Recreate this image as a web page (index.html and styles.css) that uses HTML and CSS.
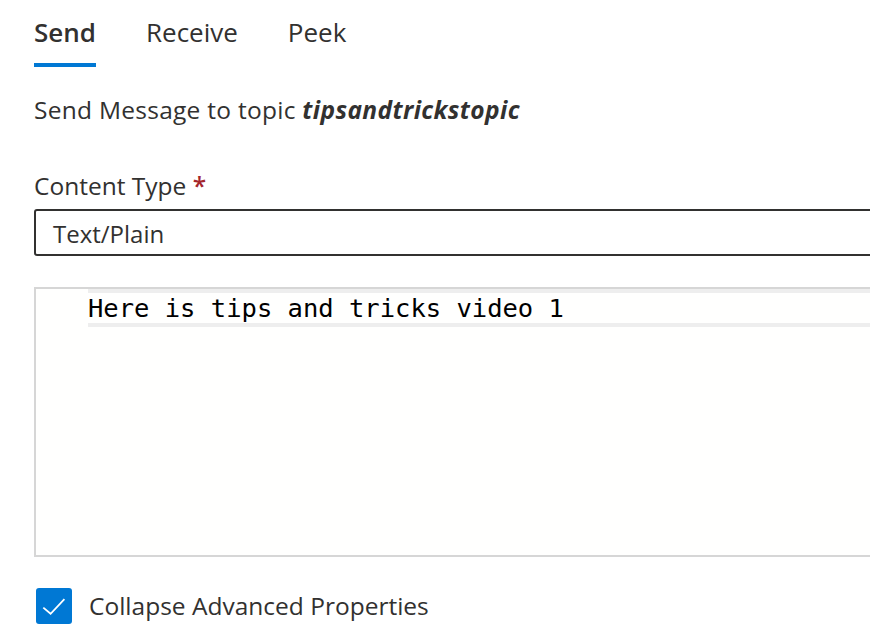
FILE: index.html
```html
<!DOCTYPE html>
<html>
<head>
<meta charset="utf-8">
<link rel="stylesheet" href="styles.css">
</head>
<body>
<div class="page">
  <div class="tabs">
    <div class="tab active">Send</div>
    <div class="tab">Receive</div>
    <div class="tab">Peek</div>
  </div>
  <p class="desc">Send Message to topic <b class="topic"><i>tipsandtrickstopic</i></b></p>
  <label class="label">Content Type <span class="req">*</span></label>
  <div class="input">Text/Plain</div>
  <div class="editor">
    <div class="line">Here is tips and tricks video 1</div>
  </div>
  <div class="check">
    <span class="box">
      <svg width="36" height="36" viewBox="0 0 36 36"><path d="M7.3 19.6 L14.6 25.8 L28.4 11.2" fill="none" stroke="#fff" stroke-width="1.8"/></svg>
    </span>
    <span class="check-label">Collapse Advanced Properties</span>
  </div>
</div>
</body>
</html>
```
FILE: styles.css
```css
html, body {
  margin: 0;
  padding: 0;
  background: #ffffff;
  overflow: hidden;
}
.page {
  width: 1000px;
  padding-left: 34px;
  font-family: "Open Sans", "Noto Sans", sans-serif;
  color: #323130;
}
.tabs {
  display: flex;
  gap: 50px;
  padding-top: 12px;
}
.tab {
  font-size: 26px;
  line-height: 40px;
  padding-bottom: 11px;
  border-bottom: 4px solid transparent;
}
.tab.active {
  font-weight: 600;
  border-bottom-color: #0078d4;
}
.desc {
  margin: 28px 0 0;
  font-size: 24.5px;
  line-height: 30px;
  letter-spacing: 0.27px;
}
.topic {
  letter-spacing: 0.4px;
}
.label {
  display: block;
  margin-top: 46px;
  font-size: 24.5px;
  line-height: 30px;
}
.req {
  color: #a4262c;
  font-weight: 600;
}
.input {
  margin-top: 8px;
  height: 43px;
  border: 2px solid #323130;
  border-radius: 3px;
  padding-left: 17px;
  font-size: 24px;
  line-height: 45px;
}
.editor {
  margin-top: 31px;
  height: 266px;
  border: 2px solid #d6d6d6;
  border-right: none;
  background: #fffffe;
  padding-left: 52px;
}
.line {
  border-top: 4px solid #eeeeee;
  border-bottom: 4px solid #eeeeee;
  font-family: "DejaVu Sans Mono", monospace;
  font-size: 25.5px;
  line-height: 30px;
  color: #000;
}
.check {
  display: flex;
  align-items: center;
  gap: 17px;
  margin-top: 31px;
  margin-left: 2px;
}
.box {
  width: 36px;
  height: 36px;
  border-radius: 3px;
  background: #0078d4;
  display: flex;
}
.check-label {
  font-size: 24.5px;
  line-height: 36px;
}
```
